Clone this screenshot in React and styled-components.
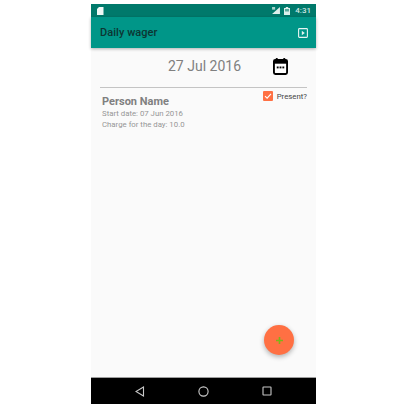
import React from 'react';
import styled, { createGlobalStyle } from 'styled-components';

const Global = createGlobalStyle`
  html, body { margin: 0; padding: 0; background: #fff; }
  body { width: 408px; height: 408px; overflow: hidden; font-family: Roboto, "Liberation Sans", sans-serif; }
`;
const Page = styled.div`
  width: 408px; height: 408px; padding: 4px 92px 4px 91px; box-sizing: border-box;
`;
const Phone = styled.div`
  width: 225px; height: 400px; display: flex; flex-direction: column; background: #fafafa; position: relative;
`;
const StatusBar = styled.div`
  height: 13px; background: #00796b; display: flex; align-items: center; justify-content: space-between; padding: 0 5px 0 6px; flex: none;
`;
const StatusRight = styled.div`
  display: flex; align-items: center; gap: 4px;
`;
const Clock = styled.span`
  font-size: 8px; font-weight: 500; color: #cfe6e2; line-height: 13px; margin-left: 1px;
`;
const Toolbar = styled.div`
  height: 31px; background: #009688; display: flex; align-items: center; justify-content: space-between;
  padding: 0 8px 0 9px; flex: none; box-shadow: 0 1px 3px rgba(0,0,0,.3); position: relative;
`;
const Title = styled.h1`
  margin: 1px 0 0; font-size: 11px; font-weight: 500; color: #0d3532; line-height: 16px; letter-spacing: .05px;
`;
const Content = styled.div`
  flex: 1; display: flex; flex-direction: column; padding: 0 9px 0 9px; min-height: 0;
`;
const DateRow = styled.div`
  height: 39px; display: flex; align-items: center; border-bottom: 1px solid #c4c4c4; flex: none; padding-left: 68px; gap: 33px;
`;
const DateText = styled.span`
  font-size: 14px; color: #808080; line-height: 18px; width: 72px; white-space: nowrap; margin-top: -4px;
`;
const Row = styled.div`
  display: flex; justify-content: space-between; padding-left: 2px;
`;
const Info = styled.div`
  display: flex; flex-direction: column; padding-top: 7px;
`;
const Name = styled.div`
  font-size: 11px; font-weight: 700; color: #808080; line-height: 13px;
`;
const Detail = styled.div`
  font-size: 7.8px; color: #969696; line-height: 11px;
`;
const Present = styled.label`
  display: flex; align-items: center; gap: 4px; font-size: 7.8px; color: #444; height: 16px;
`;
const Check = styled.span`
  width: 10px; height: 10px; background: #ff7043; display: flex; align-items: center; justify-content: center; border-radius: 1px;
`;
const Fab = styled.div`
  position: absolute; right: 22px; bottom: 49px; width: 30px; height: 30px; border-radius: 50%;
  background: #ff7043; box-shadow: 0 2px 5px rgba(0,0,0,.3); display: flex; align-items: center; justify-content: center;
`;
const NavBar = styled.div`
  height: 27px; background: #000; border-top: 1px solid #9e9e9e; box-sizing: border-box; display: flex; align-items: center;
  justify-content: space-between; padding: 0 44px 0 44px; flex: none;
`;

export default function App() {
  return (
    <Page>
      <Global />
      <Phone>
        <StatusBar>
          <svg width="7" height="8" viewBox="0 0 7 8"><path d="M2 0H6.5V8H0V2Z" fill="#eef7f5" /></svg>
          <StatusRight>
            <svg width="8" height="7" viewBox="0 0 9 8"><path d="M9 0V8H0Z" fill="#dcefeb" /><rect x="0" y="0" width="3.5" height="3" fill="#a9d3cc" /></svg>
            <svg width="6" height="8" viewBox="0 0 6 8"><path d="M1.8 0H4.2V1H6V8H0V1H1.8Z" fill="#dcefeb" /><rect x="1" y="2" width="4" height="2.5" fill="#5aa99e" /></svg>
            <Clock>4:31</Clock>
          </StatusRight>
        </StatusBar>
        <Toolbar>
          <Title>Daily wager</Title>
          <svg width="10" height="10" viewBox="0 0 10 10"><rect x=".6" y=".6" width="8.8" height="8.8" rx=".8" fill="none" stroke="#e6f4f2" strokeWidth="1.1" /><path d="M3.8 2.8L6.8 5L3.8 7.2Z" fill="#e6f4f2" /></svg>
        </Toolbar>
        <Content>
          <DateRow>
            <DateText>27 Jul 2016</DateText>
            <svg width="15" height="17" viewBox="0 0 16 18" style={{ marginTop: -3 }}>
              <rect x="3" y="0" width="2" height="3" fill="#000" />
              <rect x="11" y="0" width="2" height="3" fill="#000" />
              <rect x="1" y="2" width="14" height="15" rx="1.5" fill="#fff" stroke="#000" strokeWidth="2" />
              <rect x="1" y="2" width="14" height="4" fill="#000" />
              <rect x="4" y="9" width="2" height="2" fill="#000" />
              <rect x="7" y="9" width="2" height="2" fill="#000" />
              <rect x="10" y="9" width="2" height="2" fill="#000" />
            </svg>
          </DateRow>
          <Row>
            <Info>
              <Name>Person Name</Name>
              <Detail>Start date: 07 Jun 2016</Detail>
              <Detail>Charge for the day: 10.0</Detail>
            </Info>
            <Present>
              <Check>
                <svg width="8" height="8" viewBox="0 0 8 8"><path d="M1 4.2L3.1 6.2L7 1.8" fill="none" stroke="#fff" strokeWidth="1.1" /></svg>
              </Check>
              Present?
            </Present>
          </Row>
        </Content>
        <NavBar>
          <svg width="10" height="11" viewBox="0 0 10 11"><path d="M8.5 1V10L1 5.5Z" fill="none" stroke="#c8c8c8" strokeWidth="1.1" /></svg>
          <svg width="11" height="11" viewBox="0 0 11 11"><circle cx="5.5" cy="5.5" r="4.6" fill="none" stroke="#d0d0d0" strokeWidth="1.1" /></svg>
          <svg width="10" height="10" viewBox="0 0 10 10"><rect x="1" y="1" width="8" height="8" rx=".5" fill="none" stroke="#c8c8c8" strokeWidth="1.1" /></svg>
        </NavBar>
        <Fab>
          <svg width="7" height="7" viewBox="0 0 7 7"><path d="M3.5 0V7M0 3.5H7" stroke="#7cb518" strokeWidth="1.6" /></svg>
        </Fab>
      </Phone>
    </Page>
  );
}
